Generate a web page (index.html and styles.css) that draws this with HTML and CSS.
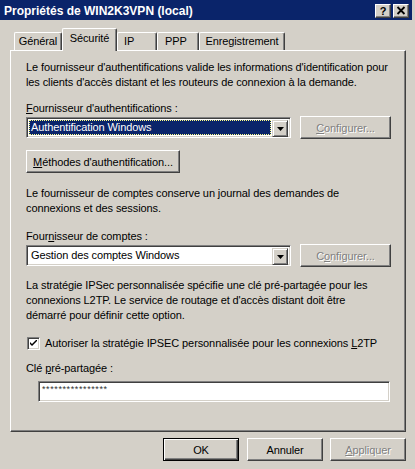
FILE: index.html
```html
<!DOCTYPE html>
<html lang="fr">
<head>
<meta charset="utf-8">
<title>Propriétés de WIN2K3VPN (local)</title>
<link rel="stylesheet" href="styles.css">
</head>
<body>
<div class="window">
  <div class="titlebar">
    <span class="title">Propriétés de WIN2K3VPN (local)</span>
    <div class="caps">
      <span class="cap-btn help">?</span>
      <span class="cap-btn close"><svg width="10" height="9" viewBox="0 0 10 9"><path d="M1.5 1 L8.5 8 M8.5 1 L1.5 8" stroke="#000" stroke-width="1.8" fill="none"/></svg></span>
    </div>
  </div>
  <div class="content">
    <div class="tabs">
      <div class="tab t-general">Général</div>
      <div class="tab sel t-sec">Sécurité</div>
      <div class="tab t-ip">IP</div>
      <div class="tab t-ppp">PPP</div>
      <div class="tab t-enr">Enregistrement</div>
    </div>
    <div class="panel">
      <p class="txt p1">Le fournisseur d'authentifications valide les informations d'identification pour<br>les clients d'accès distant et les routeurs de connexion à la demande.</p>
      <div class="txt label l1"><u>F</u>ournisseur d'authentifications :</div>
      <div class="row">
        <div class="combo">
          <div class="combo-field"><span class="hl">Authentification Windows</span></div>
          <div class="drop-btn"><svg width="7" height="4" viewBox="0 0 7 4"><path d="M0 0 H7 L3.5 4 Z" fill="#000"/></svg></div>
        </div>
        <div class="btn disabled cfg"><span><u>C</u>onfigurer...</span></div>
      </div>
      <div class="btn methods"><span><u>M</u>éthodes d'authentification...</span></div>
      <p class="txt p2">Le fournisseur de comptes conserve un journal des demandes de<br>connexions et des sessions.</p>
      <div class="txt label l2">Four<u>n</u>isseur de comptes :</div>
      <div class="row">
        <div class="combo">
          <div class="combo-field"><span class="val">Gestion des comptes Windows</span></div>
          <div class="drop-btn"><svg width="7" height="4" viewBox="0 0 7 4"><path d="M0 0 H7 L3.5 4 Z" fill="#000"/></svg></div>
        </div>
        <div class="btn disabled cfg"><span>C<u>o</u>nfigurer...</span></div>
      </div>
      <p class="txt p3">La stratégie IPSec personnalisée spécifie une clé pré-partagée pour les<br>connexions L2TP. Le service de routage et d'accès distant doit être<br>démarré pour définir cette option.</p>
      <div class="check-row">
        <span class="checkbox"><svg width="7" height="7" viewBox="0 0 7 7"><path d="M0 2 L0 4 L2 6 L7 1 L7 -1 L2 4 Z" fill="#000"/></svg></span>
        <span class="check-label">Autoriser la stratégie IPSEC personnalisée pour les connexions <u>L</u>2TP</span>
      </div>
      <div class="txt label l3">Clé <u>p</u>ré-partagée :</div>
      <div class="edit"><span class="stars">****************</span></div>
    </div>
    <div class="footer">
      <div class="btn default"><span>OK</span></div>
      <div class="btn cancel"><span>Annuler</span></div>
      <div class="btn disabled apply"><span><u>A</u>ppliquer</span></div>
    </div>
  </div>
</div>
</body>
</html>
```

FILE: styles.css
```css
html, body {
  margin: 0;
  padding: 0;
  background: #d4d0c8;
}
body {
  font-family: "Liberation Sans", Arial, sans-serif;
  font-size: 11px;
  color: #000;
}
.window {
  width: 415px;
  height: 469px;
  background: #d4d0c8;
  overflow: hidden;
  box-sizing: border-box;
}
.titlebar {
  width: 412px;
  height: 20px;
  background: #0a246a;
  display: flex;
  align-items: center;
  justify-content: space-between;
  padding: 1px 3px 0 4px;
  box-sizing: border-box;
}
.title {
  color: #fff;
  font-weight: bold;
  font-size: 12px;
  letter-spacing: 0;
}
.caps {
  display: flex;
  gap: 2px;
}
.cap-btn {
  width: 16px;
  height: 14px;
  box-sizing: border-box;
  background: #d4d0c8;
  border: 1px solid;
  border-color: #fff #404040 #404040 #fff;
  box-shadow: inset -1px -1px #808080;
  display: flex;
  align-items: center;
  justify-content: center;
  font-weight: bold;
  font-size: 11px;
  line-height: 12px;
}
.content {
  padding: 8px 0 0 10px;
}
.tabs {
  display: flex;
  height: 22px;
  padding-left: 4px;
  align-items: flex-end;
  position: relative;
  z-index: 1;
}
.tab {
  height: 18px;
  box-sizing: border-box;
  border: 1px solid;
  border-color: #fff #404040 transparent #fff;
  border-bottom: none;
  border-radius: 2px 2px 0 0;
  box-shadow: inset -1px 0 #808080;
  text-align: center;
  line-height: 16px;
  letter-spacing: -0.1px;
}
.tab.sel {
  height: 23px;
  margin-bottom: -1px;
  background: #d4d0c8;
  line-height: 18px;
}
.t-general { width: 48px; }
.t-sec { width: 55px; }
.t-ip { width: 40px; text-align: left; padding-left: 6px; }
.t-ppp { width: 42px; text-align: left; padding-left: 7px; }
.t-enr { width: 86px; }
.panel {
  width: 396px;
  height: 382px;
  box-sizing: border-box;
  border: 1px solid;
  border-color: #fff #404040 #404040 #fff;
  box-shadow: inset -1px -1px #808080;
  padding: 9px 0 0 15px;
}
.txt {
  margin: 0;
  line-height: 15px;
  letter-spacing: -0.1px;
  white-space: nowrap;
}
.p1 { margin-top: 0; }
.l1 { margin-top: 11px; }
.row {
  display: flex;
  align-items: center;
  height: 23px;
}
.combo {
  width: 265px;
  height: 21px;
  box-sizing: border-box;
  border: 1px solid;
  border-color: #808080 #fff #fff #808080;
  box-shadow: inset 1px 1px #404040, inset -1px -1px #d4d0c8;
  background: #fff;
  display: flex;
  padding: 2px;
}
.combo-field {
  flex: 1;
  display: flex;
  padding: 0 1px 0 0;
}
.hl {
  flex: 1;
  background: #0a246a;
  color: #fff;
  outline: 1px dotted #ffff88;
  outline-offset: -1px;
  line-height: 15px;
  padding-left: 2px;
  letter-spacing: -0.1px;
}
.val {
  line-height: 15px;
  padding-left: 2px;
  letter-spacing: -0.1px;
}
.drop-btn {
  width: 16px;
  height: 17px;
  box-sizing: border-box;
  background: #d4d0c8;
  border: 1px solid;
  border-color: #d4d0c8 #404040 #404040 #d4d0c8;
  box-shadow: inset 1px 1px #fff, inset -1px -1px #808080;
  display: flex;
  align-items: center;
  justify-content: center;
  padding-top: 1px;
}
.btn {
  height: 23px;
  box-sizing: border-box;
  background: #d4d0c8;
  border: 1px solid;
  border-color: #fff #404040 #404040 #fff;
  box-shadow: inset -1px -1px #808080;
  display: flex;
  align-items: center;
  justify-content: center;
  letter-spacing: -0.1px;
}
.btn.disabled {
  color: #808080;
  text-shadow: 1px 1px 0 #fff;
}
.cfg {
  width: 91px;
  margin-left: 9px;
}
.methods {
  width: 154px;
  margin-top: 11px;
}
.p2 { margin-top: 13px; }
.l2 { margin-top: 13px; }
.p3 { margin-top: 11px; }
.check-row {
  display: flex;
  align-items: center;
  margin-top: 13px;
  height: 14px;
}
.checkbox {
  width: 13px;
  height: 13px;
  margin-left: 1px;
  box-sizing: border-box;
  border: 1px solid;
  border-color: #808080 #fff #fff #808080;
  box-shadow: inset 1px 1px #404040, inset -1px -1px #d4d0c8;
  background: #fff;
  display: flex;
  align-items: center;
  justify-content: center;
}
.check-label {
  margin-left: 5px;
  letter-spacing: -0.1px;
}
.l3 { margin-top: 11px; }
.edit {
  width: 352px;
  height: 21px;
  margin-left: 12px;
  margin-top: 5px;
  box-sizing: border-box;
  border: 1px solid;
  border-color: #808080 #fff #fff #808080;
  box-shadow: inset 1px 1px #404040, inset -1px -1px #d4d0c8;
  background: #fff;
  padding: 2px 0 0 3px;
}
.stars {
  font-size: 9px;
  line-height: 10px;
  letter-spacing: 0.6px;
  color: #333;
  display: block;
}
.footer {
  display: flex;
  justify-content: flex-end;
  width: 396px;
  margin-top: 6px;
}
.footer .btn {
  width: 76px;
}
.btn.default {
  border-color: #000;
  box-shadow: inset 1px 1px #fff, inset -1px -1px #404040, inset -2px -2px #808080;
}
.cancel { margin-left: 8px; }
.apply { margin-left: 7px; }
```
